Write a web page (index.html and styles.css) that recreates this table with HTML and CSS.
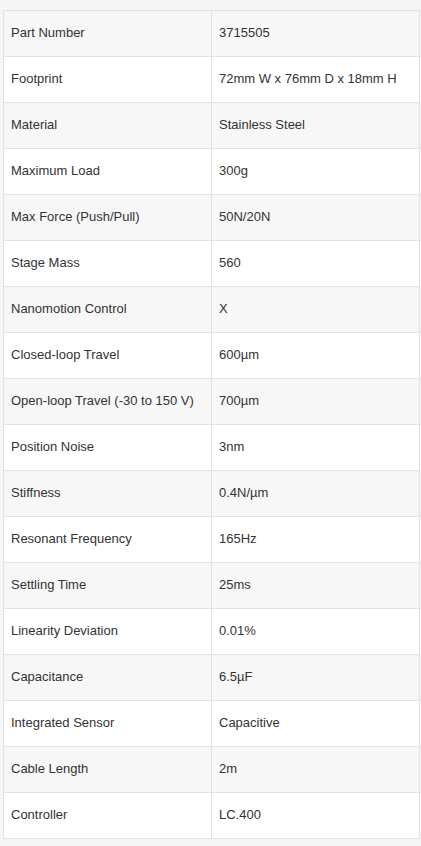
FILE: index.html
```html
<!DOCTYPE html>
<html>
<head>
<meta charset="utf-8">
<link rel="stylesheet" href="styles.css">
</head>
<body>
<div class="wrap">
<table class="specs">
<tbody>
<tr><td>Part Number</td><td>3715505</td></tr>
<tr><td>Footprint</td><td>72mm W x 76mm D x 18mm H</td></tr>
<tr><td>Material</td><td>Stainless Steel</td></tr>
<tr><td>Maximum Load</td><td>300g</td></tr>
<tr><td>Max Force (Push/Pull)</td><td>50N/20N</td></tr>
<tr><td>Stage Mass</td><td>560</td></tr>
<tr><td>Nanomotion Control</td><td>X</td></tr>
<tr><td>Closed-loop Travel</td><td>600µm</td></tr>
<tr><td>Open-loop Travel (-30 to 150 V)</td><td>700µm</td></tr>
<tr><td>Position Noise</td><td>3nm</td></tr>
<tr><td>Stiffness</td><td>0.4N/µm</td></tr>
<tr><td>Resonant Frequency</td><td>165Hz</td></tr>
<tr><td>Settling Time</td><td>25ms</td></tr>
<tr><td>Linearity Deviation</td><td>0.01%</td></tr>
<tr><td>Capacitance</td><td>6.5µF</td></tr>
<tr><td>Integrated Sensor</td><td>Capacitive</td></tr>
<tr><td>Cable Length</td><td>2m</td></tr>
<tr><td>Controller</td><td>LC.400</td></tr>
</tbody>
</table>
</div>
</body>
</html>
```
FILE: styles.css
```css
html, body {
  margin: 0;
  padding: 0;
  background: #f5f5f5;
}
.wrap {
  padding: 10px 2px 8px 3px;
}
.specs {
  width: 417px;
  border-collapse: collapse;
  font-family: "Liberation Sans", Arial, sans-serif;
  font-size: 13px;
  color: #333;
  background: #fff;
  border: 1px solid #ddd;
}
.specs td {
  border: 1px solid #e3e3e3;
  padding: 12px 8px 14px 7px;
  line-height: 19px;
  vertical-align: top;
  text-align: left;
}
.specs td:first-child {
  width: 192px;
}
.specs tr:nth-child(odd) td {
  background: #f7f7f7;
}
```
